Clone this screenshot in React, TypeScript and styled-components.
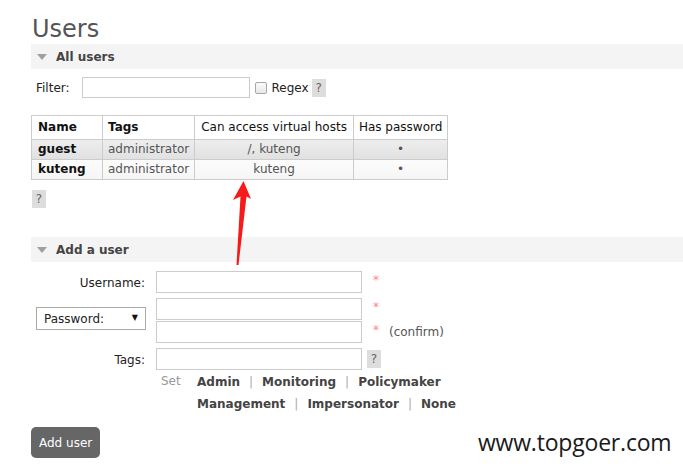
import React from 'react';
import styled, { createGlobalStyle } from 'styled-components';

const GlobalStyle = createGlobalStyle`
  html, body { margin: 0; padding: 0; background: #fff; }
  body { font-family: "DejaVu Sans", Verdana, sans-serif; font-size: 12px; color: #222; }
  * { box-sizing: border-box; }
`;

const Page = styled.div`
  position: relative;
  width: 683px;
  height: 468px;
  overflow: hidden;
  padding: 15px 0 0 31px;
`;

const Title = styled.h1`
  margin: 0 0 1px 1px;
  font-size: 24px;
  line-height: 28px;
  font-weight: normal;
  color: #555;
`;

const SectionBar = styled.h2<{ $mt: number }>`
  margin: ${p => p.$mt}px 0 0;
  height: 25px;
  display: flex;
  align-items: center;
  gap: 9px;
  padding-left: 6px;
  background: #f4f4f4;
  font-size: 12px;
  font-weight: bold;
  color: #444;
`;

const Caret = styled.span`
  width: 0;
  height: 0;
  border-left: 5px solid transparent;
  border-right: 5px solid transparent;
  border-top: 6px solid #a0a0a0;
`;

const FilterRow = styled.div`
  margin-top: 8px;
  height: 21px;
  display: flex;
  align-items: center;
  padding-left: 5px;
  color: #222;
`;

const FilterLabel = styled.label`
  margin-right: 12px;
`;

const TextInput = styled.input<{ $w: number; $h?: number }>`
  width: ${p => p.$w}px;
  height: ${p => p.$h ?? 22}px;
  margin: 0;
  border: 1px solid #ccc;
  background: #fff;
  font: inherit;
  padding: 0 3px;
`;

const CheckBox = styled.input`
  appearance: none;
  width: 12px;
  height: 12px;
  margin: 0 5px 0 5px;
  border: 1px solid #a8a8a8;
  border-radius: 2px;
  background: linear-gradient(#fafafa, #e8e8e8);
`;

const Help = styled.span<{ $ml: number }>`
  display: inline-flex;
  align-items: center;
  justify-content: center;
  width: 14px;
  height: 18px;
  margin-left: ${p => p.$ml}px;
  background: #ddd;
  color: #666;
  font-size: 12px;
`;

const HelpBlock = styled.div`
  margin: 10px 0 0 1px;
  height: 18px;
`;

const List = styled.table`
  margin-top: 17px;
  border-collapse: collapse;
  font-size: 12px;
`;

const Th = styled.th<{ $bold?: boolean; $w?: number; $px: number }>`
  border: 1px solid #ccc;
  padding: 0 ${p => p.$px}px;
  line-height: 23px;
  text-align: left;
  font-weight: ${p => (p.$bold ? 'bold' : 'normal')};
  color: #111;
  background: #fff;
  white-space: nowrap;
  ${p => (p.$w ? `width: ${p.$w}px;` : '')}
`;

const Row = styled.tr<{ $alt: 1 | 2 }>`
  background: ${p =>
    p.$alt === 1
      ? 'linear-gradient(#eeeeee, #e0e0e0)'
      : 'linear-gradient(#fcfcfc, #f5f5f5)'};
`;

const Td = styled.td<{ $kind?: 'name' | 'center'; $px: number }>`
  border: 1px solid #ccc;
  padding: 0 ${p => p.$px}px;
  line-height: 19px;
  white-space: nowrap;
  color: ${p => (p.$kind === 'name' ? '#111' : '#555')};
  font-weight: ${p => (p.$kind === 'name' ? 'bold' : 'normal')};
  text-align: ${p => (p.$kind === 'center' ? 'center' : 'left')};
`;

const Form = styled.div`
  margin-top: 9px;
  display: grid;
  grid-template-columns: 125px auto;
  row-gap: 5px;
  justify-content: start;
`;

const LabelCell = styled.div<{ $top?: boolean }>`
  display: flex;
  align-items: ${p => (p.$top ? 'flex-start' : 'center')};
  justify-content: flex-end;
  padding-right: ${p => (p.$top ? 10 : 11)}px;
  padding-top: 2px;
  color: #222;
`;

const Fields = styled.div`
  display: flex;
  flex-direction: column;
  gap: 1px;
`;

const FieldLine = styled.div`
  display: flex;
  align-items: center;
`;

const Mandatory = styled.span`
  color: #f88;
  margin-left: 11px;
  margin-top: -4px;
  font-size: 12px;
`;

const Note = styled.span`
  margin-left: 10px;
  color: #555;
`;

const SelectWrap = styled.div`
  position: relative;
  width: 110px;
  height: 23px;
  margin-top: 7px;
`;

const Select = styled.select`
  appearance: none;
  width: 100%;
  height: 100%;
  margin: 0;
  border: 1px solid #aaa;
  background: #fff;
  font: inherit;
  color: #222;
  padding: 0 0 0 7px;
`;

const SelectArrow = styled.span`
  position: absolute;
  right: 8px;
  top: 6px;
  font-size: 8px;
  color: #111;
  pointer-events: none;
`;

const TagSet = styled.div`
  margin-left: 130px;
  display: grid;
  grid-template-columns: 36px auto;
  line-height: 22px;
  margin-top: 1px;
`;

const SetLabel = styled.span`
  color: #999;
  line-height: 20px;
`;

const TagLines = styled.div`
  display: flex;
  flex-direction: column;
`;

const TagLine = styled.div`
  display: flex;
`;

const TagLink = styled.span`
  font-weight: bold;
  color: #444;
`;

const Sep = styled.span`
  color: #aaa;
  margin: 0 9px;
`;

const Button = styled.button`
  margin-top: 12px;
  height: 31px;
  padding: 0 8px;
  border: none;
  border-radius: 5px;
  background: #666;
  color: #fff;
  font: inherit;
  font-size: 12px;
`;

const Watermark = styled.div`
  position: absolute;
  left: 478px;
  top: 431px;
  font-family: "Open Sans", "Noto Sans", sans-serif;
  font-size: 23px;
  line-height: 23px;
  letter-spacing: -0.2px;
  color: #1a1a1a;
`;

const Arrow = styled.svg`
  position: absolute;
  left: 228px;
  top: 176px;
  pointer-events: none;
`;

const users = [
  { name: 'guest', tags: 'administrator', vhosts: '/, kuteng', alt: 1 as const },
  { name: 'kuteng', tags: 'administrator', vhosts: 'kuteng', alt: 2 as const },
];

const Tags = ({ items }: { items: string[] }) => (
  <TagLine>
    {items.map((t, i) => (
      <React.Fragment key={t}>
        {i > 0 && <Sep>|</Sep>}
        <TagLink>{t}</TagLink>
      </React.Fragment>
    ))}
  </TagLine>
);

export default function App() {
  return (
    <>
      <GlobalStyle />
      <Page>
        <Title>Users</Title>
        <SectionBar $mt={0}>
          <Caret />
          All users
        </SectionBar>
        <FilterRow>
          <FilterLabel>Filter:</FilterLabel>
          <TextInput $w={168} $h={21} />
          <CheckBox type="checkbox" />
          <span>Regex</span>
          <Help $ml={3}>?</Help>
        </FilterRow>
        <List>
          <thead>
            <tr>
              <Th $bold $w={71} $px={6}>Name</Th>
              <Th $bold $px={5}>Tags</Th>
              <Th $px={6}>Can access virtual hosts</Th>
              <Th $px={5}>Has password</Th>
            </tr>
          </thead>
          <tbody>
            {users.map(u => (
              <Row key={u.name} $alt={u.alt}>
                <Td $kind="name" $px={6}>{u.name}</Td>
                <Td $px={5}>{u.tags}</Td>
                <Td $kind="center" $px={6}>{u.vhosts}</Td>
                <Td $kind="center" $px={5}>•</Td>
              </Row>
            ))}
          </tbody>
        </List>
        <HelpBlock>
          <Help $ml={0}>?</Help>
        </HelpBlock>
        <SectionBar $mt={29}>
          <Caret />
          Add a user
        </SectionBar>
        <Form>
          <LabelCell>Username:</LabelCell>
          <Fields>
            <FieldLine>
              <TextInput $w={206} />
              <Mandatory>*</Mandatory>
            </FieldLine>
          </Fields>
          <LabelCell $top>
            <SelectWrap>
              <Select defaultValue="password">
                <option value="password">Password:</option>
                <option value="hash">Password hash:</option>
              </Select>
              <SelectArrow>▼</SelectArrow>
            </SelectWrap>
          </LabelCell>
          <Fields>
            <FieldLine>
              <TextInput $w={206} type="password" />
              <Mandatory>*</Mandatory>
            </FieldLine>
            <FieldLine>
              <TextInput $w={206} type="password" />
              <Mandatory>*</Mandatory>
              <Note>(confirm)</Note>
            </FieldLine>
          </Fields>
          <LabelCell>Tags:</LabelCell>
          <Fields>
            <FieldLine>
              <TextInput $w={206} />
              <Help $ml={5}>?</Help>
            </FieldLine>
          </Fields>
        </Form>
        <TagSet>
          <SetLabel>Set</SetLabel>
          <TagLines>
            <Tags items={['Admin', 'Monitoring', 'Policymaker']} />
            <Tags items={['Management', 'Impersonator', 'None']} />
          </TagLines>
        </TagSet>
        <Button>Add user</Button>
        <Watermark>www.topgoer.com</Watermark>
        <Arrow width="30" height="95" viewBox="228 176 30 95">
          <polygon
            points="243.5,181 251,199 246.5,196.5 238.5,265 236.5,265 240.5,196.5 233,200"
            fill="#f61a1a"
          />
        </Arrow>
      </Page>
    </>
  );
}
